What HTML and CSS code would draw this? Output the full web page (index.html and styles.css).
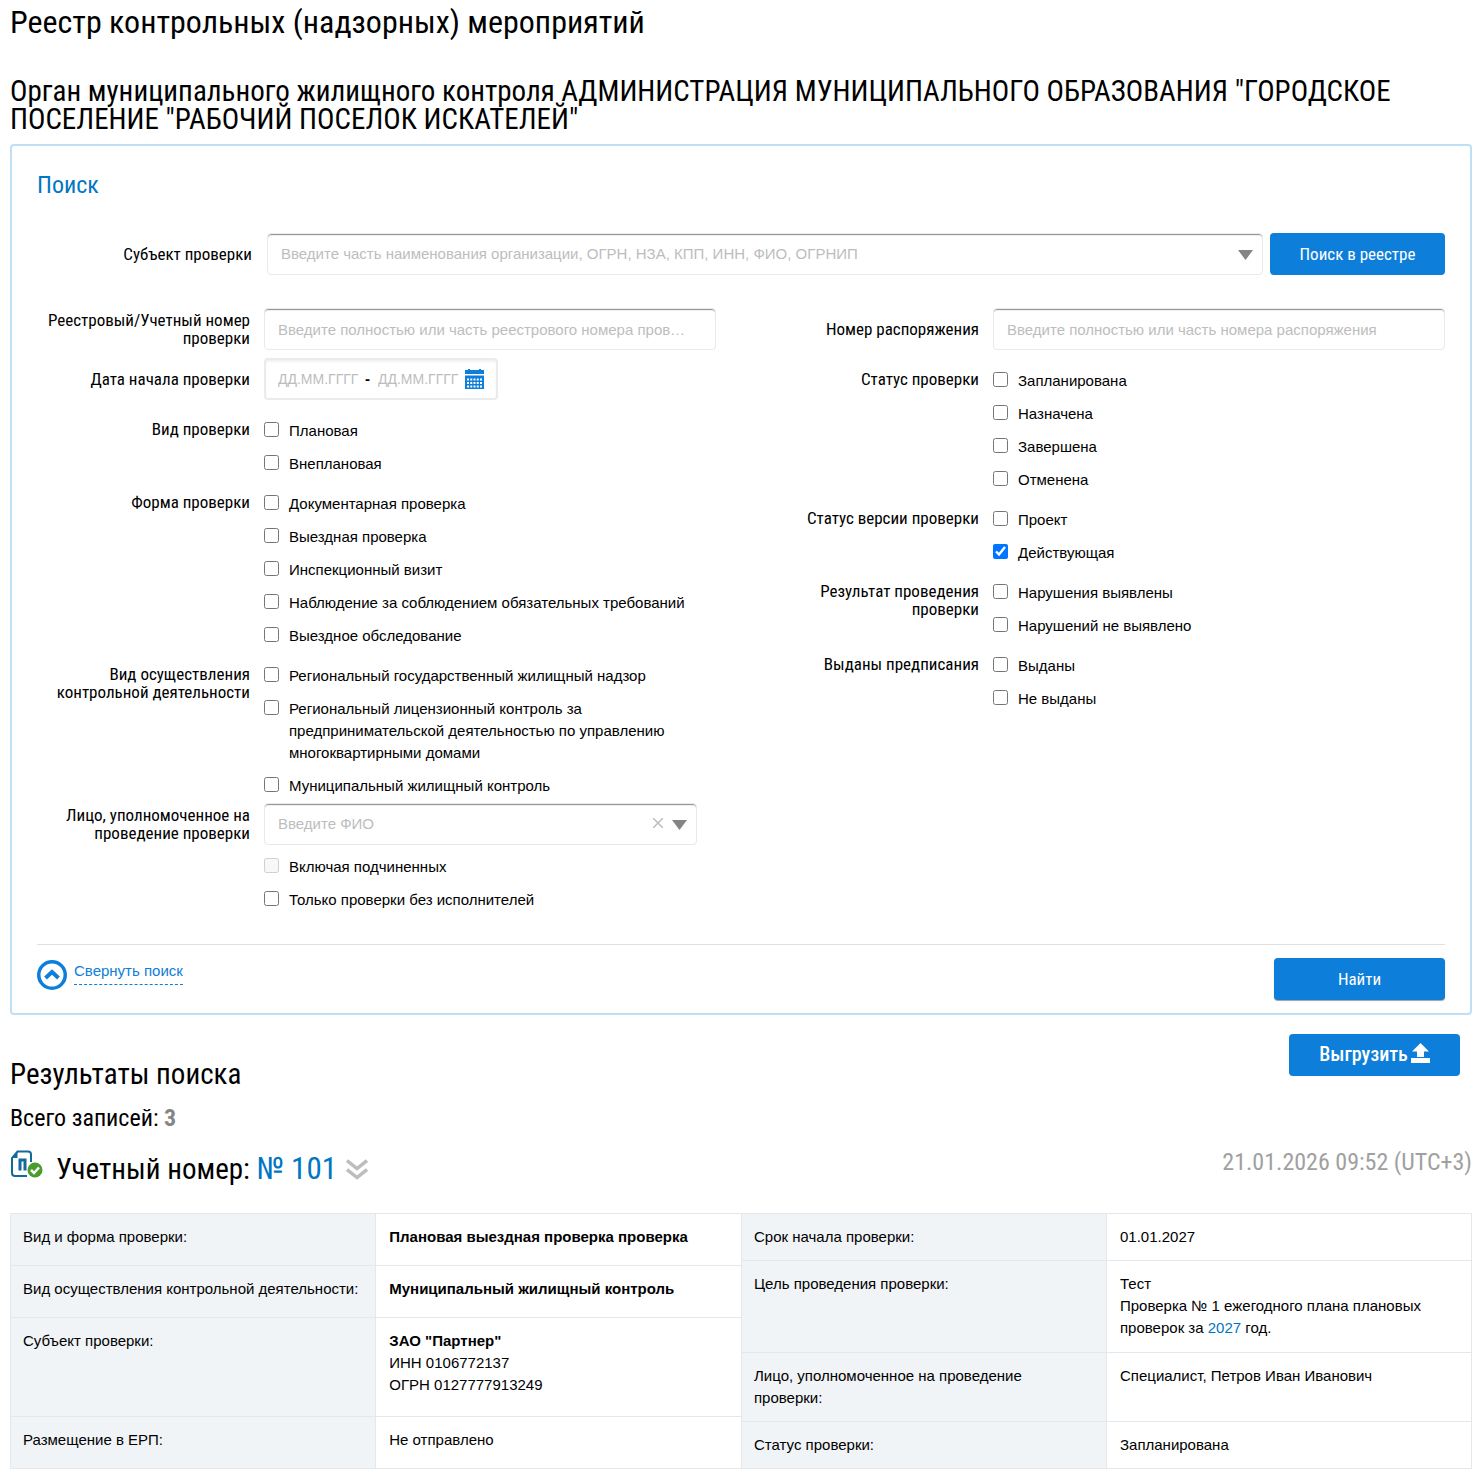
FILE: index.html
```
<!DOCTYPE html>
<html lang="ru">
<head>
    <meta charset="UTF-8">
    <meta name="viewport" content="width=device-width, initial-scale=1.0">
    <title>Реестр контрольных (надзорных) мероприятий</title>
    <link rel="stylesheet" href="styles.css">
</head>
<body>
    <h1>Реестр контрольных (надзорных) мероприятий</h1>
    <h2 class="org-name">Орган муниципального жилищного контроля АДМИНИСТРАЦИЯ МУНИЦИПАЛЬНОГО ОБРАЗОВАНИЯ "ГОРОДСКОЕ ПОСЕЛЕНИЕ "РАБОЧИЙ ПОСЕЛОК ИСКАТЕЛЕЙ"</h2>

    <!-- Search form -->
    <form class="search-panel" action="index.html" method="get">
        <h3 class="search-title">Поиск</h3>

        <div class="subject-row">
            <label class="field-label" for="subject">Субъект проверки</label>
            <div class="select-wrap">
                <select class="field" id="subject" name="subject">
                    <option value="">Введите часть наименования организации, ОГРН, НЗА, КПП, ИНН, ФИО, ОГРНИП</option>
                </select>
                <svg class="arrow" width="15" height="10" viewBox="0 0 15 10"><path d="M0 0h15L7.500 10z" fill="#858585"/></svg>
            </div>
            <button class="button registry-button" type="button">Поиск в реестре</button>
        </div>

        <div class="search-columns">
            <div class="search-column">
                <div class="form-row">
                    <label class="field-label" for="regNumber">Реестровый/Учетный номер проверки</label>
                    <input class="field reg-number" type="text" id="regNumber" name="regNumber" placeholder="Введите полностью или часть реестрового номера проверки">
                </div>
                <div class="form-row">
                    <label class="field-label" for="dateFrom">Дата начала проверки</label>
                    <div class="date-range">
                        <input type="text" id="dateFrom" name="dateFrom" placeholder="ДД.ММ.ГГГГ">
                        <span class="dash">-</span>
                        <input type="text" id="dateTo" name="dateTo" placeholder="ДД.ММ.ГГГГ" aria-label="Дата окончания">
                        <svg width="19" height="20" viewBox="0 0 19 20">
                            <path d="M0 1h3V0h2v1h9V0h2v1h3v4H0zM0 6.500h19V20H0z" fill="#0d7ed9"/>
                            <path d="M2 10.500h15M2 14h15M2 17.500h15" stroke="#fff" stroke-width="2" stroke-dasharray="2 1.250"/>
                        </svg>
                    </div>
                </div>
                <div class="check-row first" role="group" aria-labelledby="kindLabel">
                    <span class="field-label" id="kindLabel">Вид проверки</span>
                    <div class="checks">
                        <label><input type="checkbox" name="kind">Плановая</label>
                        <label><input type="checkbox" name="kind">Внеплановая</label>
                    </div>
                </div>
                <div class="check-row" role="group" aria-labelledby="formLabel">
                    <span class="field-label" id="formLabel">Форма проверки</span>
                    <div class="checks">
                        <label><input type="checkbox" name="form">Документарная проверка</label>
                        <label><input type="checkbox" name="form">Выездная проверка</label>
                        <label><input type="checkbox" name="form">Инспекционный визит</label>
                        <label><input type="checkbox" name="form">Наблюдение за соблюдением обязательных требований</label>
                        <label><input type="checkbox" name="form">Выездное обследование</label>
                    </div>
                </div>
                <div class="check-row control-row" role="group" aria-labelledby="controlLabel">
                    <span class="field-label" id="controlLabel">Вид осуществления контрольной деятельности</span>
                    <div class="checks">
                        <label><input type="checkbox" name="control">Региональный государственный жилищный надзор</label>
                        <label><input type="checkbox" name="control">Региональный лицензионный контроль за предпринимательской деятельностью по управлению многоквартирными домами</label>
                        <label><input type="checkbox" name="control">Муниципальный жилищный контроль</label>
                    </div>
                </div>
                <div class="form-row person-row">
                    <label class="field-label" for="person">Лицо, уполномоченное на проведение проверки</label>
                    <div class="select-wrap person-select">
                        <select class="field" id="person" name="person">
                            <option value="">Введите ФИО</option>
                        </select>
                        <button class="clear-button" type="button" aria-label="Очистить">
                            <svg width="10" height="10" viewBox="0 0 10 10"><path d="M0 0l10 10M10 0L0 10" stroke="#bdbdbd" stroke-width="1.500"/></svg>
                        </button>
                        <svg class="arrow" width="15" height="10" viewBox="0 0 15 10"><path d="M0 0h15L7.500 10z" fill="#858585"/></svg>
                    </div>
                </div>
                <div class="check-row person-checks">
                    <span></span>
                    <div class="checks">
                        <label><input type="checkbox" name="subordinates" disabled>Включая подчиненных</label>
                        <label><input type="checkbox" name="noExecutors">Только проверки без исполнителей</label>
                    </div>
                </div>
            </div>

            <div class="search-column">
                <div class="form-row">
                    <label class="field-label" for="orderNumber">Номер распоряжения</label>
                    <input class="field" type="text" id="orderNumber" name="orderNumber" placeholder="Введите полностью или часть номера распоряжения">
                </div>
                <div class="check-row first" role="group" aria-labelledby="statusLabel">
                    <span class="field-label" id="statusLabel">Статус проверки</span>
                    <div class="checks">
                        <label><input type="checkbox" name="status">Запланирована</label>
                        <label><input type="checkbox" name="status">Назначена</label>
                        <label><input type="checkbox" name="status">Завершена</label>
                        <label><input type="checkbox" name="status">Отменена</label>
                    </div>
                </div>
                <div class="check-row" role="group" aria-labelledby="versionLabel">
                    <span class="field-label" id="versionLabel">Статус версии проверки</span>
                    <div class="checks">
                        <label><input type="checkbox" name="version">Проект</label>
                        <label><input type="checkbox" name="version" checked>Действующая</label>
                    </div>
                </div>
                <div class="check-row" role="group" aria-labelledby="resultLabel">
                    <span class="field-label" id="resultLabel">Результат проведения проверки</span>
                    <div class="checks">
                        <label><input type="checkbox" name="result">Нарушения выявлены</label>
                        <label><input type="checkbox" name="result">Нарушений не выявлено</label>
                    </div>
                </div>
                <div class="check-row" role="group" aria-labelledby="ordersLabel">
                    <span class="field-label" id="ordersLabel">Выданы предписания</span>
                    <div class="checks">
                        <label><input type="checkbox" name="orders">Выданы</label>
                        <label><input type="checkbox" name="orders">Не выданы</label>
                    </div>
                </div>
            </div>
        </div>

        <div class="search-footer">
            <a class="collapse-link" href="#">
                <svg width="30" height="30" viewBox="0 0 30 30" fill="none" stroke="#0d7ed9">
                    <circle cx="15" cy="15" r="13.250" stroke-width="3.500"/>
                    <path d="M8.500 18L15 12l6.500 6" stroke-width="4"/>
                </svg>
                <span>Свернуть поиск</span>
            </a>
            <button class="button find-button" type="submit">Найти</button>
        </div>
    </form>

    <!-- Search results -->
    <section class="results">
        <div class="results-header">
            <h2>Результаты поиска</h2>
            <button class="button export-button" type="button">Выгрузить
                <svg width="19" height="20" viewBox="0 0 19 20" fill="#fff"><path d="M9.500 0L18 8.500h-5V14H6V8.500H1zM0 15h19v5H0z"/></svg>
            </button>
        </div>
        <p class="total">Всего записей: <b>3</b></p>

        <div class="record-header">
            <svg class="record-icon" width="33" height="29" viewBox="0 0 33 29" fill="none">
                <path d="M17 26H5q-3 0-3-3V8l5.500-6.500H18q3 0 3 3V12" stroke="#14699c" stroke-width="2"/>
                <path d="M2 8l5.500-6.500V8z" fill="#14699c"/>
                <path d="M10 20.500V10h5v10.500" stroke="#14699c" stroke-width="3"/>
                <circle cx="25" cy="20" r="7.500" fill="#4a9c2d"/>
                <path d="M21 20l3 3 5-5.500" stroke="#fff" stroke-width="2.500"/>
            </svg>
            <h2>Учетный номер: <a href="#">№ 101</a></h2>
            <svg class="record-toggle" width="22" height="21" viewBox="0 0 22 21" fill="none" stroke="#bdbdbd" stroke-width="3.500"><path d="M1 1.500l10 8 10-8M1 10.500l10 8 10-8"/></svg>
            <time class="record-date">21.01.2026 09:52 (UTC+3)</time>
        </div>

        <div class="record-tables">
            <table class="record-table left-table">
                <tr>
                    <th>Вид и форма проверки:</th>
                    <td><b>Плановая выездная проверка проверка</b></td>
                </tr>
                <tr>
                    <th>Вид осуществления контрольной деятельности:</th>
                    <td><b>Муниципальный жилищный контроль</b></td>
                </tr>
                <tr class="subject">
                    <th>Субъект проверки:</th>
                    <td><b>ЗАО "Партнер"</b><br>ИНН 0106772137<br>ОГРН 0127777913249</td>
                </tr>
                <tr>
                    <th>Размещение в ЕРП:</th>
                    <td>Не отправлено</td>
                </tr>
            </table>
            <table class="record-table">
                <tr>
                    <th>Срок начала проверки:</th>
                    <td>01.01.2027</td>
                </tr>
                <tr>
                    <th>Цель проведения проверки:</th>
                    <td>Тест<br>Проверка № 1 ежегодного плана плановых проверок за <a href="#">2027</a> год.</td>
                </tr>
                <tr>
                    <th>Лицо, уполномоченное на проведение проверки:</th>
                    <td>Специалист, Петров Иван Иванович</td>
                </tr>
                <tr>
                    <th>Статус проверки:</th>
                    <td>Запланирована</td>
                </tr>
            </table>
        </div>
    </section>
</body>
</html>
```
FILE: styles.css
```
* {
    margin: 0;
    padding: 0;
    box-sizing: border-box;
}
body {
    padding: 6px 1px 11px 10px;
    font-family: "Liberation Sans", Arial, sans-serif;
    font-size: 15px;
    line-height: 22px;
    color: #000;
    background-color: #fff;
}
h1, h2, h3, .field-label, .button, .total, .record-date {
    font-family: "Roboto Condensed", "Liberation Sans Narrow", Roboto, sans-serif;
    font-weight: 400;
}
a {
    color: #0077c2;
    text-decoration: none;
}
svg {
    display: block;
}
h1 {
    font-size: 32px;
    line-height: 32px;
}
h2 {
    font-size: 29px;
    line-height: 30px;
}
.org-name {
    margin: 39px 0 11px;
    line-height: 28px;
}

/* Search form */
.search-panel {
    padding: 26px 25px 13px;
    border: 2px solid #bfdff7;
    border-radius: 4px;
}
.search-title {
    font-size: 24px;
    line-height: 26px;
    color: #0077c2;
}
.field-label {
    font-size: 17px;
    line-height: 18px;
    text-align: right;
}
.field {
    width: 100%;
    height: 42px;
    padding: 0 13px;
    border: 1px solid #e6eaee;
    border-radius: 4px;
    box-shadow: inset 0 1px 0 #999, inset 0 2px 0 #eee;
    font: inherit;
    background-color: #fff;
    appearance: none;
}
select.field {
    color: #bdbdbd;
}
input::placeholder {
    color: #bdbdbd;
    opacity: 1;
}
.reg-number {
    padding-right: 28px;
    text-overflow: ellipsis;
}
.select-wrap {
    position: relative;
}
.arrow {
    position: absolute;
    right: 10px;
    top: 17px;
    pointer-events: none;
}
.clear-button {
    position: absolute;
    right: 34px;
    top: 15px;
    border: none;
    background: none;
}
.button {
    height: 42px;
    border: none;
    border-radius: 4px;
    font-size: 17px;
    color: #fff;
    background-color: #0d7ed9;
}
.subject-row {
    display: grid;
    grid-template-columns: 215px 1fr 175px;
    align-items: center;
    margin-top: 35px;
}
.subject-row .select-wrap {
    margin: 0 7px 0 15px;
}
.search-columns {
    display: grid;
    grid-template-columns: 1fr 1fr;
    gap: 50px;
    margin-top: 33px;
}
.form-row, .check-row {
    display: grid;
    grid-template-columns: 213px 1fr;
    gap: 14px;
}
.form-row {
    align-items: center;
    margin-bottom: 8px;
}
.date-range {
    display: flex;
    align-items: center;
    justify-self: start;
    height: 42px;
    padding: 0 12px 0 11px;
    border: 2px solid #ebebeb;
    border-radius: 4px;
    box-shadow: inset 0 2px 2px #f2f2f2;
}
.date-range input {
    width: 88px;
    padding-left: 1px;
    border: none;
    font: inherit;
    font-size: 14px;
    background: none;
}
.dash {
    width: 12px;
    font-weight: 700;
}
.check-row {
    margin-bottom: 18px;
}
.check-row.first {
    margin-top: 20px;
}
.check-row.control-row {
    margin-bottom: 6px;
}
.checks {
    display: flex;
    flex-direction: column;
    gap: 11px;
}
.checks label {
    display: flex;
    gap: 10px;
}
.checks input {
    flex: none;
    width: 15px;
    height: 15px;
    margin-top: 2px;
}
.person-select {
    margin-right: 19px;
}
.person-row {
    margin-bottom: 11px;
}
.person-checks {
    margin-bottom: 0;
}
.search-footer {
    display: flex;
    justify-content: space-between;
    margin-top: 33px;
    padding-top: 13px;
    border-top: 1px solid #e0e0e0;
}
.collapse-link {
    display: flex;
    gap: 7px;
    padding-top: 2px;
    color: #0d7ed9;
}
.collapse-link span {
    height: 25px;
    border-bottom: 1px dashed #0d7ed9;
}
.find-button {
    width: 171px;
    box-shadow: 0 1px 1px #a0a0a0;
}

/* Results */
.results-header {
    display: flex;
    justify-content: space-between;
    align-items: flex-start;
    padding: 19px 12px 0 0;
}
.results-header h2 {
    padding-top: 25px;
}
.export-button {
    display: flex;
    justify-content: center;
    gap: 3px;
    width: 171px;
    padding-top: 9px;
    font-size: 20px;
    font-weight: 500;
    line-height: 22px;
}
.total {
    margin-top: 14px;
    font-size: 24px;
    line-height: 30px;
}
.total b {
    color: #858585;
}
.record-header {
    display: flex;
    align-items: flex-start;
    margin: 17px 0 29px;
}
.record-header h2 {
    padding-top: 4px;
    margin: 0 9px 0 13px;
}
.record-header h2 a {
    font-size: 31px;
}
.record-toggle {
    margin-top: 9px;
}
.record-date {
    margin-left: auto;
    font-size: 24px;
    line-height: 24px;
    color: #a0a0a0;
}
.record-tables {
    display: grid;
    grid-template-columns: 1fr 1fr;
}
.record-table {
    width: 100%;
    table-layout: fixed;
    border-collapse: collapse;
}
.record-table th, .record-table td {
    padding: 12px 13px;
    border: 1px solid #e4e8eb;
    vertical-align: top;
    text-align: left;
}
.record-table th {
    padding-left: 12px;
    font-weight: 400;
    background-color: #f0f4f7;
}
.record-table.left-table th, .record-table.left-table td {
    padding-bottom: 17px;
}
.record-table.left-table td {
    border-right: none;
}
.record-table.left-table .subject td {
    padding-bottom: 20px;
}
```
